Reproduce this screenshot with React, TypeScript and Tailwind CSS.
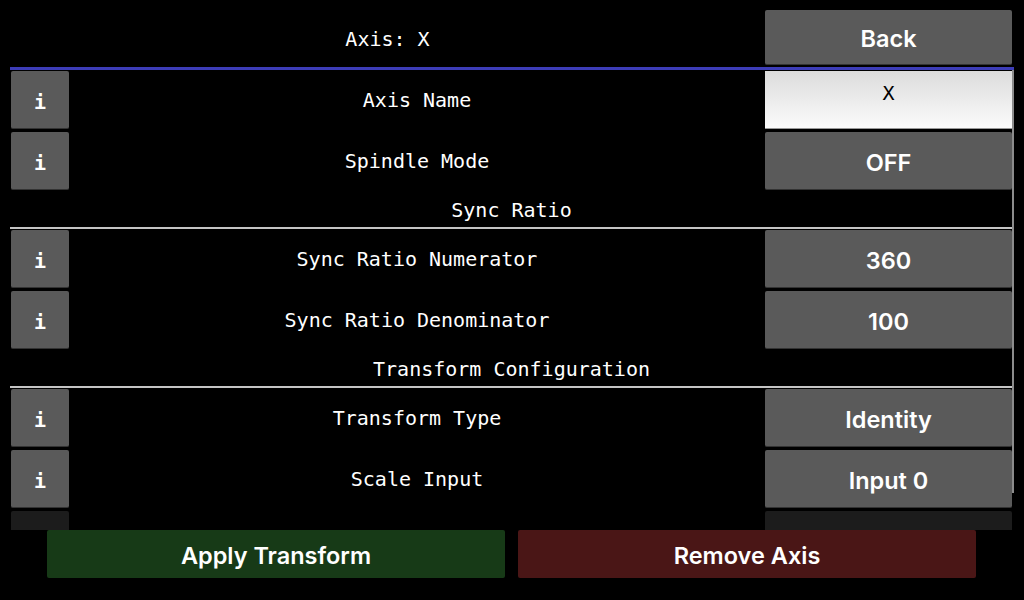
import type { JSX } from "react";

const mono = "font-['DejaVu_Sans_Mono',monospace] text-[20px] text-white";
const btnText = "font-['Inter',sans-serif] font-semibold text-[23.5px] text-white pt-[4px]";

export default function App() {
  return (
    <div className="w-[1024px] h-[600px] bg-black flex flex-col overflow-hidden">
      <Header />
      <div className="relative ml-[10px] w-[1004px] h-[463px] border-t-[3px] border-[#3d3db8] overflow-hidden">
        <div className="flex flex-col pt-[1px] pl-[1px] pr-[2px]">
          {items.map((it, i) =>
            it.kind === "section" ? (
              <Section key={i} title={it.label} />
            ) : (
              <Row key={i} label={it.label} value={it.value} input={it.input} />
            )
          )}
          <div className="flex justify-between h-[58px]">
            <div className="w-[58px] h-full bg-[#1c1c1c] rounded-[2px]" />
            <div className="w-[247px] h-full bg-[#1c1c1c] rounded-[2px]" />
          </div>
        </div>
        <div className="absolute right-0 top-0 w-[2px] h-[423px] bg-[#8c8c8c]" />
      </div>
      <div className="flex gap-[13px] px-[47px]">
        <button className={`w-[458px] h-[48px] rounded-[2px] bg-[#173a17] ${btnText}`}>
          Apply Transform
        </button>
        <button className={`w-[458px] h-[48px] rounded-[2px] bg-[#4a1616] ${btnText}`}>
          Remove Axis
        </button>
      </div>
    </div>
  );
}

function Header() {
  return (
    <div className="flex pt-[10px] pl-[10px] h-[67px]">
      <div className={`flex-1 flex items-center justify-center h-[55px] pt-[3px] ${mono}`}>
        Axis: X
      </div>
      <button
        className={`w-[247px] h-[55px] bg-[#5a5a5a] rounded-[2px] border-b border-[#333] ${btnText}`}
      >
        Back
      </button>
      <div className="w-[12px]" />
    </div>
  );
}

function Row({
  label,
  value,
  input = false
}: {
  label: string;
  value?: string;
  input?: boolean;
}): JSX.Element {
  return (
    <div className="flex h-[58px] mb-[3px] items-stretch">
      <button
        className={`w-[58px] bg-[#5a5a5a] rounded-[2px] border-b border-[#333] font-bold pt-[4px] ${mono}`}
      >
        i
      </button>
      <div className={`flex-1 flex items-center justify-center ${mono}`}>{label}</div>
      {input ? (
        <div className="w-[247px] bg-gradient-to-b from-[#dcdcdc] to-[#fbfbfb] border-b border-[#999] flex justify-center pt-[7px]">
          <span className="font-['DejaVu_Sans_Mono',monospace] text-[20px] text-black">
            {value}
          </span>
        </div>
      ) : (
        <button
          className={`w-[247px] bg-[#5a5a5a] rounded-[2px] border-b border-[#333] ${btnText}`}
        >
          {value}
        </button>
      )}
    </div>
  );
}

function Section({ title }: { title: string }) {
  return (
    <div
      className={`-ml-[1px] -mr-[1px] h-[36px] mb-[1px] border-b-2 border-[#c4c4c4] flex items-center justify-center ${mono}`}
    >
      {title}
    </div>
  );
}

type Item = {
  kind: "row" | "section";
  label: string;
  value?: string;
  input?: boolean;
};

const items: Array<Item> = [
  { kind: "row", label: "Axis Name", value: "X", input: true },
  { kind: "row", label: "Spindle Mode", value: "OFF" },
  { kind: "section", label: "Sync Ratio" },
  { kind: "row", label: "Sync Ratio Numerator", value: "360" },
  { kind: "row", label: "Sync Ratio Denominator", value: "100" },
  { kind: "section", label: "Transform Configuration" },
  { kind: "row", label: "Transform Type", value: "Identity" },
  { kind: "row", label: "Scale Input", value: "Input 0" }
];
